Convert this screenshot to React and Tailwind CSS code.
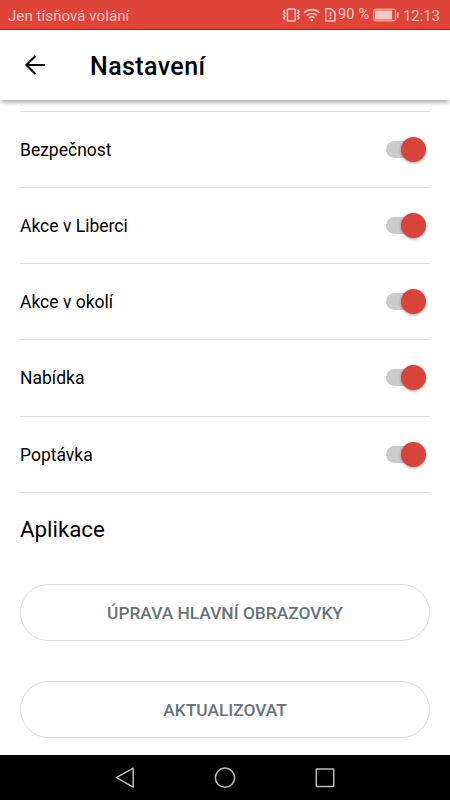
import React from "react";

const categories = [
  "Bezpečnost",
  "Akce v Liberci",
  "Akce v okolí",
  "Nabídka",
  "Poptávka",
];

const VibrateIcon = () => (
  <svg width="19" height="16" viewBox="0 0 19 16" fill="none" stroke="#f5c6c2">
    <rect x="5.4" y="1.9" width="7.8" height="12.2" rx="0.8" strokeWidth="1.5" />
    <path d="M3 2.8 1.6 4.4 3 6 1.6 7.6 3 9.2 1.6 10.8 3 12.4" strokeWidth="1.5" />
    <path d="M15.6 2.8 17 4.4 15.6 6 17 7.6 15.6 9.2 17 10.8 15.6 12.4" strokeWidth="1.5" />
  </svg>
);

const WifiIcon = () => (
  <svg width="18" height="16" viewBox="0 0 18 16" fill="none" stroke="#f5c6c2" strokeWidth="1.6">
    <path d="M1 5.8a11.2 11.2 0 0 1 15.6 0" />
    <path d="M3.7 8.5a7.4 7.4 0 0 1 10.2 0" />
    <path d="M6.2 11.1a3.8 3.8 0 0 1 5.2 0" />
    <circle cx="8.8" cy="13.1" r="1.3" fill="#f5c6c2" stroke="none" />
  </svg>
);

const SimIcon = () => (
  <svg width="12" height="16" viewBox="0 0 12 16" fill="none" stroke="#f5c6c2" strokeWidth="1.5">
    <path d="M1.8 1.8h5.2l4 3.6v8.6H1.8z" strokeLinejoin="round" />
    <path d="M6.4 5v4.2M6.4 10.4v1.8" strokeWidth="1.7" />
  </svg>
);

const BatteryIcon = () => (
  <svg width="27" height="14" viewBox="0 0 27 14" fill="none" stroke="#f5c6c2">
    <rect x="0.9" y="1.2" width="21.6" height="11.6" rx="1.4" strokeWidth="1" />
    <rect x="2" y="2.5" width="17.2" height="9" fill="#f5c6c2" stroke="none" />
    <path d="M24.7 4.4v5.4" strokeWidth="1.6" />
  </svg>
);

const StatusBar = () => (
  <div className="flex h-[30px] shrink-0 items-center border-b border-[#cc1409] bg-[#de4439] pl-2 text-[15px] leading-[18px] text-[#f5c6c2]">
    <span className="w-[274px] pt-[2px] tracking-[0.08px]">Jen tísňová volání</span>
    <div className="flex items-center pt-px">
      <VibrateIcon />
      <span className="ml-[2px]"><WifiIcon /></span>
      <span className="ml-[3px]"><SimIcon /></span>
    </div>
    <span className="ml-[2px] w-[35px] whitespace-nowrap pt-px text-[14.5px] tracking-[0.2px]">90 %</span>
    <span className="pt-px"><BatteryIcon /></span>
    <span className="ml-[3px] pt-[2px] whitespace-nowrap tracking-[-0.1px]">12:13</span>
  </div>
);

const Header = () => (
  <header className="relative z-10 flex h-[70px] shrink-0 items-center bg-white shadow-[0_3px_5px_-1px_rgba(0,0,0,0.38)]">
    <svg className="ml-6" width="22" height="22" viewBox="0 0 22 22" fill="none" stroke="#000" strokeWidth="2.1">
      <path d="M21 11H2.6M11.4 2 2.4 11l9 9" />
    </svg>
    <h1 className="ml-[44px] pt-[3px] text-[25px] leading-8 font-medium tracking-[0.4px] text-black">Nastavení</h1>
  </header>
);

const Toggle = () => (
  <button role="switch" aria-checked="true" className="mr-1 flex h-[25px] w-10 items-center">
    <span className="flex h-[17px] w-8 items-center rounded-full bg-[#cbcbcb]">
      <span className="ml-[14.7px] h-[25px] w-[25px] shrink-0 rounded-full bg-[#d8443a] shadow-[0_1px_3px_rgba(0,0,0,0.4)]" />
    </span>
  </button>
);

const NavigationBar = () => (
  <nav className="flex h-[45px] shrink-0 items-center bg-black pl-[114px]">
    <svg width="222" height="24" viewBox="0 0 222 24" fill="none" stroke="#bdbdbd" strokeWidth="1.5">
      <path d="M19.2 2.2v19L2.4 11.7z" strokeLinejoin="round" />
      <circle cx="111" cy="11.7" r="9.6" />
      <rect x="202.3" y="3" width="17.4" height="17.4" rx="0.5" />
    </svg>
  </nav>
);

const App = () => {
  return (
    <div className="flex h-[800px] w-[450px] flex-col overflow-hidden bg-white font-['Roboto',sans-serif]">
      <StatusBar />
      <Header />

      <main className="flex-1 overflow-hidden px-5 pt-[10.5px]">
        <ul className="border-t-[1.5px] border-[#e0e0e0]">
          {categories.map((name) => (
            <li key={name} className="flex h-[76.25px] items-center justify-between border-b-[1.5px] border-[#e0e0e0]">
              <span className="pt-px text-[17.5px] leading-6 text-black">{name}</span>
              <Toggle />
            </li>
          ))}
        </ul>

        <h2 className="mt-[21px] text-[22.3px] leading-[30px] text-black">Aplikace</h2>

        <button className="mt-10 block h-[57px] w-full rounded-full border border-[#dcdcdc] pt-px text-[17.35px] font-medium text-[#68737a]">
          ÚPRAVA HLAVNÍ OBRAZOVKY
        </button>
        <button className="mt-[40.3px] block h-[57px] w-full rounded-full border border-[#dcdcdc] pt-px text-[17.35px] font-medium text-[#68737a]">
          AKTUALIZOVAT
        </button>
      </main>

      <NavigationBar />
    </div>
  );
};

export default App;
